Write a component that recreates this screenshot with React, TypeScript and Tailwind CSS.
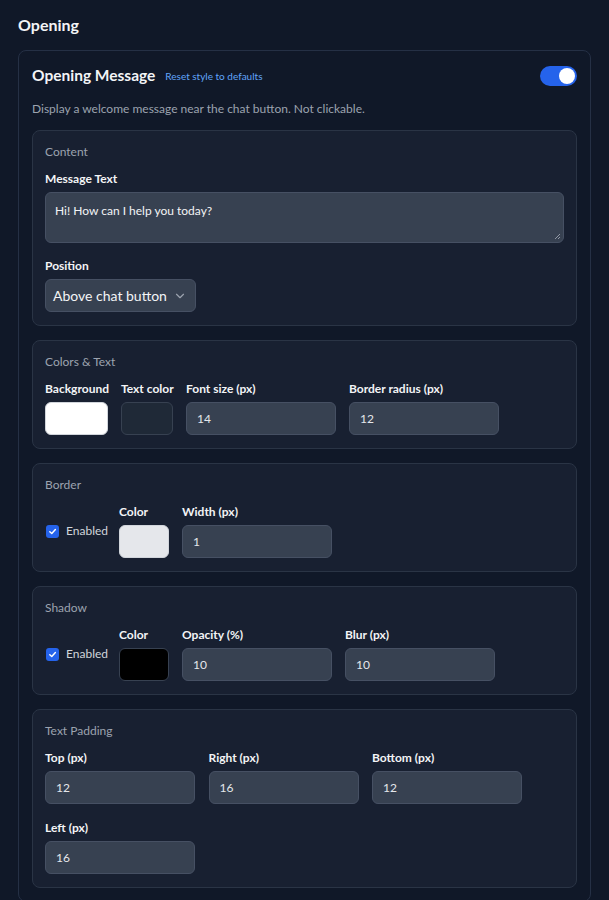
import React from "react";

const font = { fontFamily: 'Lato, "Open Sans", sans-serif' };

function Section({ title, children }: { title: string; children: React.ReactNode }) {
  return (
    <div className="rounded-lg border border-[#2a3445] bg-[#182031] px-[12px] pt-[13px] pb-[13px]">
      <div className="text-[12px] leading-4 text-[#9ca3af]">{title}</div>
      <div className="mt-[11px]">{children}</div>
    </div>
  );
}

function Label({ children }: { children: React.ReactNode }) {
  return <div className="mb-[5px] text-[12px] font-bold leading-4 text-[#f3f4f6] whitespace-nowrap">{children}</div>;
}

function NumInput({ value, w = "w-[150px]" }: { value: string; w?: string }) {
  return (
    <div className={`${w} flex h-[33px] items-center rounded-md border border-[#465063] bg-[#374151] px-[10px] text-[12px] text-[#e5e7eb]`}>
      {value}
    </div>
  );
}

function Field({ label, value, w }: { label: string; value: string; w?: string }) {
  return (
    <div>
      <Label>{label}</Label>
      <NumInput value={value} w={w} />
    </div>
  );
}

function Swatch({ label, color, w, border }: { label: string; color: string; w: string; border: string }) {
  return (
    <div className={w}>
      <Label>{label}</Label>
      <div className={`h-[33px] w-full rounded-md border ${border}`} style={{ backgroundColor: color }} />
    </div>
  );
}

function Check() {
  return (
    <div className="flex w-[61px] items-center gap-[7px] pl-[1px]">
      <div className="flex h-[13px] w-[13px] shrink-0 items-center justify-center rounded-[3px] bg-[#2563eb]">
        <svg width="9" height="9" viewBox="0 0 10 10" fill="none">
          <path d="M2 5.2 L4.2 7.3 L8.2 2.8" stroke="white" strokeWidth="1.6" strokeLinecap="round" strokeLinejoin="round" />
        </svg>
      </div>
      <span className="text-[12px] text-[#d1d5db]">Enabled</span>
    </div>
  );
}

export default function App() {
  return (
    <div className="min-h-[900px] bg-[#101828] px-[18px] pt-[13px]" style={font}>
      <h2 className="mb-[13px] text-[16px] font-bold leading-6 text-[#f3f4f6]">Opening</h2>
      <div className="rounded-lg border border-[#253045] bg-[#101828] px-[13px] pt-[13px] pb-[13px]">
        <div className="flex h-6 items-center justify-between">
          <div className="flex items-center gap-[10px]">
            <span className="text-[15.5px] font-bold text-[#f3f4f6]">Opening Message</span>
            <span className="text-[10px] text-[#60a5fa]">Reset style to defaults</span>
          </div>
          <div className="flex h-[20px] w-[37px] items-center justify-end rounded-full bg-[#2563eb] px-[2px]">
            <div className="h-[16px] w-[16px] rounded-full bg-white" />
          </div>
        </div>
        <p className="mt-[13px] text-[12px] leading-4 text-[#9ca3af]">Display a welcome message near the chat button. Not clickable.</p>

        <div className="mt-[13px] flex flex-col gap-[14px]">
          <Section title="Content">
            <Label>Message Text</Label>
            <div className="relative h-[51px] rounded-md border border-[#465063] bg-[#374151] px-[9px] pt-[9px] text-[12px] text-[#f3f4f6]">
              Hi! How can I help you today?
              <svg className="absolute bottom-[2px] right-[2px]" width="7" height="7" viewBox="0 0 7 7">
                <path d="M6 1 L1 6 M6 4 L4 6" stroke="#9ca3af" strokeWidth="0.9" />
              </svg>
            </div>
            <div className="mt-[15px]">
              <Label>Position</Label>
              <div className="flex h-[33px] w-[151px] items-center justify-between rounded-md border border-[#465063] bg-[#374151] pl-[7px] pr-[8px] text-[14px] text-[#f3f4f6]">
                <span>Above chat button</span>
                <svg width="14" height="14" viewBox="0 0 24 24" fill="none" stroke="#9ca3af" strokeWidth="2" strokeLinecap="round" strokeLinejoin="round">
                  <path d="m6 9 6 6 6-6" />
                </svg>
              </div>
            </div>
          </Section>

          <Section title="Colors & Text">
            <div className="flex gap-[13px]">
              <Swatch label="Background" color="#ffffff" w="w-[63px]" border="border-[#d1d5db]" />
              <Swatch label="Text color" color="#1f2937" w="w-[52px]" border="border-[#374151]" />
              <Field label="Font size (px)" value="14" />
              <Field label="Border radius (px)" value="12" />
            </div>
          </Section>

          <Section title="Border">
            <div className="flex items-center gap-[13px]">
              <Check />
              <Swatch label="Color" color="#e5e7eb" w="w-[50px]" border="border-[#d1d5db]" />
              <Field label="Width (px)" value="1" />
            </div>
          </Section>

          <Section title="Shadow">
            <div className="flex items-center gap-[13px]">
              <Check />
              <Swatch label="Color" color="#000000" w="w-[50px]" border="border-[#374151]" />
              <Field label="Opacity (%)" value="10" />
              <Field label="Blur (px)" value="10" />
            </div>
          </Section>

          <Section title="Text Padding">
            <div className="grid grid-cols-[150px_150px_150px] gap-x-[13.5px] gap-y-[16px]">
              <Field label="Top (px)" value="12" />
              <Field label="Right (px)" value="16" />
              <Field label="Bottom (px)" value="12" />
              <Field label="Left (px)" value="16" />
            </div>
          </Section>
        </div>
      </div>
    </div>
  );
}
